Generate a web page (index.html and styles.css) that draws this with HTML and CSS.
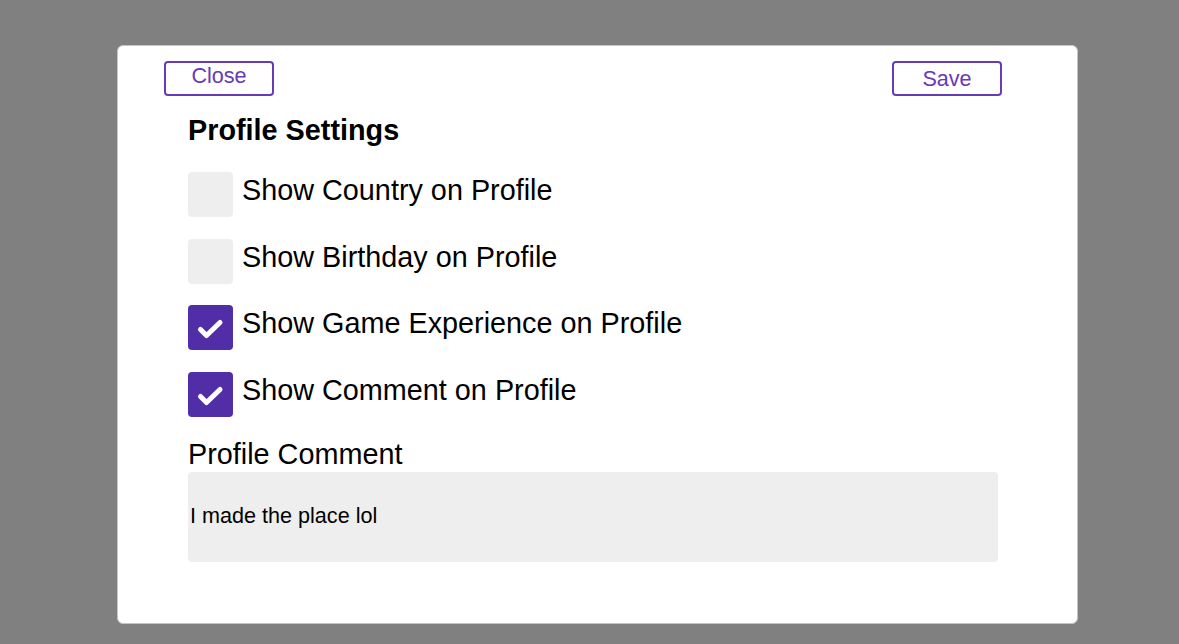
FILE: index.html
```html
<!DOCTYPE html>
<html>
<head>
<meta charset="utf-8">
<link rel="stylesheet" href="styles.css">
</head>
<body>
<div class="modal">
  <div class="toolbar">
    <button class="btn btn-close">Close</button>
    <button class="btn">Save</button>
  </div>
  <div class="content">
    <h2 class="title">Profile Settings</h2>
    <div class="option">
      <span class="box"></span>
      <span class="label">Show Country on Profile</span>
    </div>
    <div class="option">
      <span class="box"></span>
      <span class="label">Show Birthday on Profile</span>
    </div>
    <div class="option">
      <span class="box checked"><svg viewBox="0 0 45 45" width="45" height="45"><path d="M12.5 24.5 L18.5 30.5 L32 17.5" fill="none" stroke="#fff" stroke-width="5" stroke-linecap="round" stroke-linejoin="round"/></svg></span>
      <span class="label">Show Game Experience on Profile</span>
    </div>
    <div class="option">
      <span class="box checked"><svg viewBox="0 0 45 45" width="45" height="45"><path d="M12.5 24.5 L18.5 30.5 L32 17.5" fill="none" stroke="#fff" stroke-width="5" stroke-linecap="round" stroke-linejoin="round"/></svg></span>
      <span class="label">Show Comment on Profile</span>
    </div>
    <div class="field-label">Profile Comment</div>
    <div class="comment">I made the place lol</div>
  </div>
</div>
</body>
</html>
```

FILE: styles.css
```css
html, body {
  margin: 0;
  padding: 0;
}
body {
  background: #808080;
  font-family: "Liberation Sans", Arial, sans-serif;
  color: #000;
  height: 644px;
  overflow: hidden;
}
.modal {
  box-sizing: border-box;
  margin: 45px 0 0 117px;
  width: 961px;
  height: 579px;
  background: #fff;
  border: 1px solid #c4c4c4;
  border-radius: 6px;
}
.toolbar {
  display: flex;
  justify-content: space-between;
  padding: 15px 75px 0 46px;
}
.btn {
  box-sizing: border-box;
  width: 110px;
  height: 35px;
  background: #fff;
  border: 2px solid #673ab7;
  border-radius: 4px;
  color: #673ab7;
  font-family: "Liberation Sans", Arial, sans-serif;
  font-size: 21.6px;
  padding: 0;
  line-height: 1;
}
.btn-close {
  padding-bottom: 5px;
}
.content {
  width: 810px;
  padding-left: 70px;
}
.title {
  margin: 18px 0 25px;
  font-size: 28.8px;
  font-weight: bold;
  line-height: 33px;
}
.option {
  display: flex;
  align-items: flex-start;
  gap: 9px;
  height: 45px;
  margin-bottom: 21.5px;
}
.box {
  flex: none;
  width: 45px;
  height: 45px;
  border-radius: 4px;
  background: #eeeeee;
  display: block;
}
.box svg {
  display: block;
}
.box.checked {
  background: #512da8;
}
.label {
  font-size: 28.8px;
  line-height: 33px;
  margin-top: 2px;
}
.field-label {
  font-size: 28.8px;
  line-height: 33px;
  margin-top: 0;
}
.comment {
  box-sizing: border-box;
  width: 810px;
  height: 90px;
  margin-top: 1px;
  background: #eeeeee;
  border-radius: 4px;
  padding: 31px 2px 0;
  font-size: 21.6px;
  line-height: 25px;
}
```
